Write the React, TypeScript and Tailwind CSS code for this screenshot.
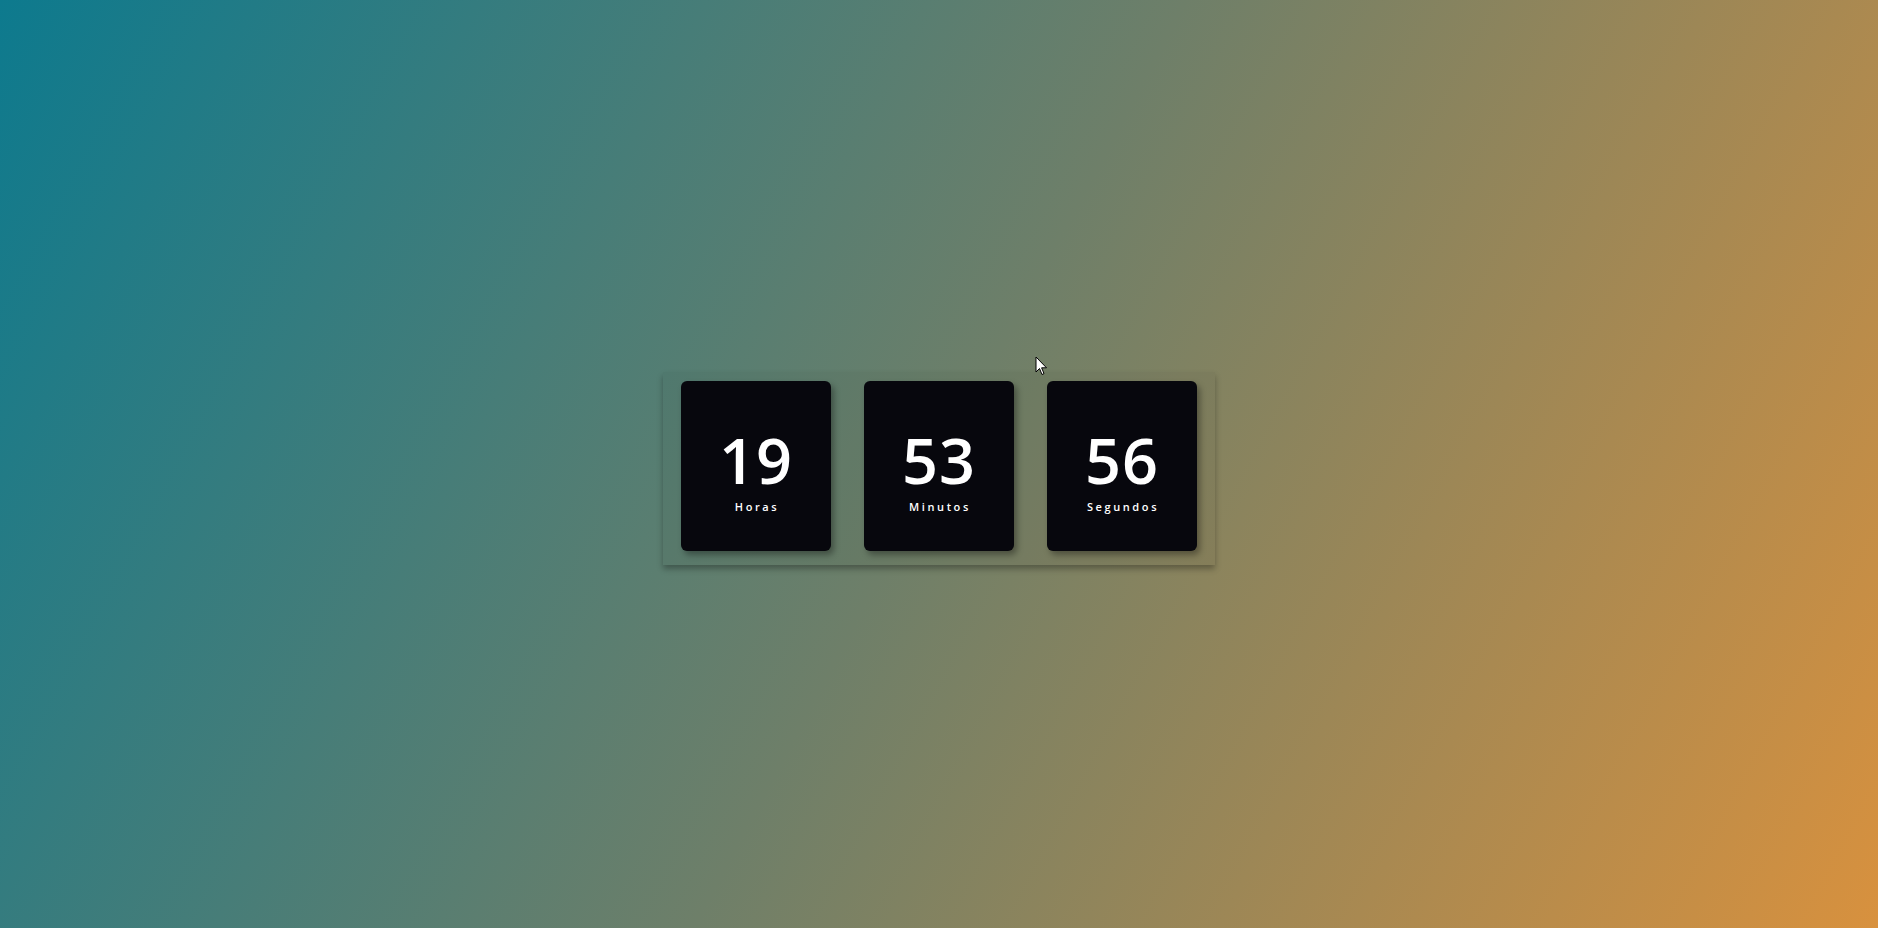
import React from "react";

function Card({ value, label }: { value: string; label: string }) {
  return (
    <div className="w-[150px] h-[170px] rounded-[6px] bg-[#07070d] shadow-[3px_4px_6px_rgba(0,0,0,0.35)] flex flex-col items-center justify-center text-white">
      <div className="text-[63px] leading-[64px] font-semibold mt-[10px] tracking-[1px]">{value}</div>
      <div className="text-[11px] leading-[14px] tracking-[2.6px] font-semibold mt-[8px] pl-[2px]">{label}</div>
    </div>
  );
}

export default function App() {
  return (
    <div
      className="relative w-full h-screen flex items-center justify-center pt-[9px] bg-[linear-gradient(118deg,#0d7a8e_0%,#6e7f69_50%,#d8913e_100%)]"
      style={{ fontFamily: '"Open Sans", "Noto Sans", sans-serif' }}
    >
      <div className="flex gap-[33px] px-[18px] pt-[9px] pb-[14px] bg-black/[0.04] shadow-[0_4px_6px_rgba(0,0,0,0.3)]">
        <Card value="19" label="Horas" />
        <Card value="53" label="Minutos" />
        <Card value="56" label="Segundos" />
      </div>
      <svg
        className="absolute left-[1035px] top-[356px]"
        width="13"
        height="20"
        viewBox="0 0 13 20"
      >
        <path d="M1 1 L1 16 L4.5 12.5 L7 18.5 L9 17.6 L6.6 11.8 L11.5 11.8 Z" fill="#fff" stroke="#000" strokeWidth="1" strokeLinejoin="round" />
      </svg>
    </div>
  );
}
